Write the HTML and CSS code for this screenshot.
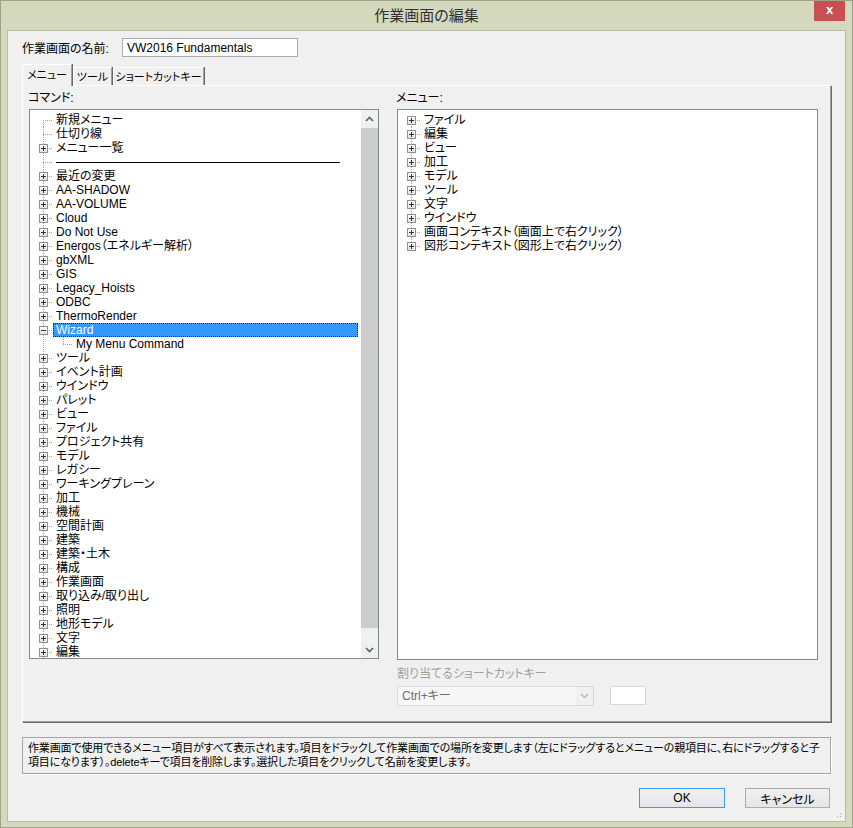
FILE: index.html
```html
<!DOCTYPE html>
<html>
<head>
  <meta charset="utf-8">
  <title>作業画面の編集</title>
  <link rel="stylesheet" href="styles.css">
</head>
<body>
  <div class="window">
    <div class="titlebar">
      <span></span>
      <span class="title">作業画面の編集</span>
      <span class="close">x</span>
    </div>

    <div class="client">
      <div class="name-row">
        <label for="wsName">作業画面の名前:</label>
        <input type="text" id="wsName" value="VW2016 Fundamentals">
      </div>

      <div class="tabs">
        <div class="tab active w-menu">メニュー</div>
        <div class="tab w-tool">ツール</div>
        <div class="tab w-key">ショートカットキー</div>
      </div>

      <div class="panel">
        <div class="col col-left">
          <div class="caption">コマンド:</div>
          <div class="treebox">
            <div class="tree">
              <div class="row first"><i class="nox"></i><span class="lbl">新規メニュー</span></div>
              <div class="row"><i class="nox"></i><span class="lbl">仕切り線</span></div>
              <div class="row"><i class="exp"></i><span class="lbl">メニュー一覧</span></div>
              <div class="row"><i class="nox"></i><span class="lbl"><span class="sep-line"></span></span></div>
              <div class="row"><i class="exp"></i><span class="lbl">最近の変更</span></div>
              <div class="row"><i class="exp"></i><span class="lbl">AA-SHADOW</span></div>
              <div class="row"><i class="exp"></i><span class="lbl">AA-VOLUME</span></div>
              <div class="row"><i class="exp"></i><span class="lbl">Cloud</span></div>
              <div class="row"><i class="exp"></i><span class="lbl">Do Not Use</span></div>
              <div class="row"><i class="exp"></i><span class="lbl">Energos（エネルギー解析）</span></div>
              <div class="row"><i class="exp"></i><span class="lbl">gbXML</span></div>
              <div class="row"><i class="exp"></i><span class="lbl">GIS</span></div>
              <div class="row"><i class="exp"></i><span class="lbl">Legacy_Hoists</span></div>
              <div class="row"><i class="exp"></i><span class="lbl">ODBC</span></div>
              <div class="row"><i class="exp"></i><span class="lbl">ThermoRender</span></div>
              <div class="row"><i class="exp open"></i><span class="lbl sel">Wizard</span></div>
              <div class="row child"><i class="nox"></i><span class="lbl">My Menu Command</span></div>
              <div class="row"><i class="exp"></i><span class="lbl">ツール</span></div>
              <div class="row"><i class="exp"></i><span class="lbl">イベント計画</span></div>
              <div class="row"><i class="exp"></i><span class="lbl">ウインドウ</span></div>
              <div class="row"><i class="exp"></i><span class="lbl">パレット</span></div>
              <div class="row"><i class="exp"></i><span class="lbl">ビュー</span></div>
              <div class="row"><i class="exp"></i><span class="lbl">ファイル</span></div>
              <div class="row"><i class="exp"></i><span class="lbl">プロジェクト共有</span></div>
              <div class="row"><i class="exp"></i><span class="lbl">モデル</span></div>
              <div class="row"><i class="exp"></i><span class="lbl">レガシー</span></div>
              <div class="row"><i class="exp"></i><span class="lbl">ワーキングプレーン</span></div>
              <div class="row"><i class="exp"></i><span class="lbl">加工</span></div>
              <div class="row"><i class="exp"></i><span class="lbl">機械</span></div>
              <div class="row"><i class="exp"></i><span class="lbl">空間計画</span></div>
              <div class="row"><i class="exp"></i><span class="lbl">建築</span></div>
              <div class="row"><i class="exp"></i><span class="lbl">建築・土木</span></div>
              <div class="row"><i class="exp"></i><span class="lbl">構成</span></div>
              <div class="row"><i class="exp"></i><span class="lbl">作業画面</span></div>
              <div class="row"><i class="exp"></i><span class="lbl">取り込み/取り出し</span></div>
              <div class="row"><i class="exp"></i><span class="lbl">照明</span></div>
              <div class="row"><i class="exp"></i><span class="lbl">地形モデル</span></div>
              <div class="row"><i class="exp"></i><span class="lbl">文字</span></div>
              <div class="row"><i class="exp"></i><span class="lbl">編集</span></div>
            </div>
            <div class="vscroll">
              <div class="sbtn">
                <svg width="9" height="6" viewBox="0 0 9 6"><path d="M1 5 L4.5 1.5 L8 5" fill="none" stroke="#606060" stroke-width="1.6"/></svg>
              </div>
              <div class="track"><div class="thumb"></div></div>
              <div class="sbtn">
                <svg width="9" height="6" viewBox="0 0 9 6"><path d="M1 1 L4.5 4.5 L8 1" fill="none" stroke="#606060" stroke-width="1.6"/></svg>
              </div>
            </div>
          </div>
        </div>

        <div class="col col-right">
          <div class="caption">メニュー:</div>
          <div class="treebox right">
            <div class="tree">
              <div class="row first"><i class="exp"></i><span class="lbl">ファイル</span></div>
              <div class="row"><i class="exp"></i><span class="lbl">編集</span></div>
              <div class="row"><i class="exp"></i><span class="lbl">ビュー</span></div>
              <div class="row"><i class="exp"></i><span class="lbl">加工</span></div>
              <div class="row"><i class="exp"></i><span class="lbl">モデル</span></div>
              <div class="row"><i class="exp"></i><span class="lbl">ツール</span></div>
              <div class="row"><i class="exp"></i><span class="lbl">文字</span></div>
              <div class="row"><i class="exp"></i><span class="lbl">ウインドウ</span></div>
              <div class="row"><i class="exp"></i><span class="lbl">画面コンテキスト（画面上で右クリック）</span></div>
              <div class="row last"><i class="exp"></i><span class="lbl">図形コンテキスト（図形上で右クリック）</span></div>
            </div>
          </div>

          <div class="shortcut-label">割り当てるショートカットキー</div>
          <div class="shortcut-row">
            <div class="combo">
              <span class="combo-text">Ctrl+キー</span>
              <span class="combo-arrow">
                <svg width="9" height="6" viewBox="0 0 9 6"><path d="M1 1 L4.5 4.5 L8 1" fill="none" stroke="#bcbcbc" stroke-width="1.5"/></svg>
              </span>
            </div>
            <div class="keybox"></div>
          </div>
        </div>
      </div>

      <div class="desc">
        作業画面で使用できるメニュー項目がすべて表示されます。項目をドラックして作業画面での場所を変更します（左にドラッグするとメニューの親項目に、右にドラッグすると子<br>
        項目になります）。deleteキーで項目を削除します。選択した項目をクリックして名前を変更します。
      </div>

      <div class="buttons">
        <button class="btn default">OK</button>
        <button class="btn">キャンセル</button>
      </div>

      <div class="grip"></div>
    </div>
  </div>
</body>
</html>
```

FILE: styles.css
```css
body {
  margin: 0;
  background: #d4d9be;
  font-family: "Liberation Sans", "Noto Sans CJK JP", sans-serif;
  font-size: 12px;
  font-feature-settings: "palt";
  color: #000;
}
.window {
  width: 853px;
  height: 828px;
  box-sizing: border-box;
  border: 1px solid #9ea389;
  background: #d4d9be;
}
.titlebar {
  height: 29px;
  display: grid;
  grid-template-columns: 1fr auto 1fr;
}
.title {
  font-size: 15px;
  line-height: 30px;
  color: #333;
}
.close {
  justify-self: end;
  align-self: start;
  width: 31px;
  height: 20px;
  margin-right: 7px;
  background: #c75050;
  color: #fff;
  font-size: 13px;
  font-weight: bold;
  line-height: 18px;
  text-align: center;
}
.client {
  position: relative;
  height: 790px;
  margin: 0 6px;
  border: 1px solid #b8bda2;
  background: #f0f0f0;
  padding: 0 14px;
}

/* name */
.name-row {
  display: flex;
  align-items: center;
  padding-top: 7px;
}
.name-row label {
  width: 100px;
}
.name-row input {
  width: 176px;
  height: 19px;
  box-sizing: border-box;
  border: 1px solid #abadb3;
  padding: 0 4px;
  font: inherit;
  font-size: 12px;
}

/* tabs */
.tabs {
  display: flex;
  align-items: flex-end;
  margin-top: 7px;
  height: 21px;
}
.tab {
  height: 18px;
  line-height: 18px;
  box-sizing: border-box;
  text-align: center;
  white-space: nowrap;
  font-size: 11px;
  border-top: 1px solid #fff;
  border-left: 1px solid #fff;
  border-right: 1px solid #a0a0a0;
  box-shadow: 1px 0 0 #696969;
  margin-right: 1px;
}
.tab.active {
  position: relative;
  z-index: 1;
  background: #f0f0f0;
  margin-bottom: -1px;
  height: 22px;
  line-height: 20px;
}
.w-menu { width: 50px; }
.w-tool { width: 39px; }
.w-key { width: 91px; }

/* panel */
.panel {
  display: flex;
  gap: 18px;
  height: 637px;
  box-sizing: border-box;
  border-top: 1px solid #fff;
  border-left: 1px solid #fff;
  border-right: 1px solid #a0a0a0;
  border-bottom: 1px solid #a0a0a0;
  box-shadow: 1px 1px 0 #696969;
  padding: 0 6px;
}
.caption {
  line-height: 14px;
  margin: 5px 0 4px -1px;
}
.col-left {
  width: 350px;
}
.col-right {
  width: 421px;
}
.treebox {
  display: flex;
  height: 550px;
  box-sizing: border-box;
  border: 1px solid #828790;
  background: #fff;
  overflow: hidden;
}
.treebox.right {
  height: 551px;
}
.tree {
  flex: 1;
  padding-top: 3px;
  overflow: hidden;
}
.row {
  display: flex;
  align-items: flex-start;
  height: 14px;
  padding-left: 9px;
  white-space: nowrap;
  background-image:
    repeating-linear-gradient(to bottom, #a0a0a0 0 1px, transparent 1px 2px),
    repeating-linear-gradient(to right, #a0a0a0 0 1px, transparent 1px 2px);
  background-repeat: no-repeat;
  background-position: 13px 0, 13px 7px;
  background-size: 1px 14px, 10px 1px;
}
.row.first {
  background-position: 13px 7px, 13px 7px;
  background-size: 1px 7px, 10px 1px;
}
.row.last {
  background-size: 1px 8px, 10px 1px;
}
.row.child {
  padding-left: 29px;
  background-image:
    repeating-linear-gradient(to bottom, #a0a0a0 0 1px, transparent 1px 2px),
    repeating-linear-gradient(to bottom, #a0a0a0 0 1px, transparent 1px 2px),
    repeating-linear-gradient(to right, #a0a0a0 0 1px, transparent 1px 2px);
  background-position: 13px 0, 33px 0, 33px 7px;
  background-size: 1px 14px, 1px 8px, 10px 1px;
}
.exp, .nox {
  flex: none;
  width: 9px;
  height: 9px;
  margin-top: 3px;
  box-sizing: border-box;
}
.exp {
  border: 1px solid #919191;
  background:
    linear-gradient(#23334f, #23334f) center / 5px 1px no-repeat,
    linear-gradient(#23334f, #23334f) center / 1px 5px no-repeat,
    linear-gradient(#fff, #e2e2e2);
}
.exp.open {
  background:
    linear-gradient(#23334f, #23334f) center / 5px 1px no-repeat,
    linear-gradient(#fff, #e2e2e2);
}
.lbl {
  margin-left: 5px;
  padding: 0 3px;
  height: 14px;
  line-height: 14px;
}
.lbl.sel {
  flex: 1;
  margin-right: 3px;
  background: #3399ff;
  color: #fff;
  outline: 1px dotted #222;
  outline-offset: -1px;
}
.sep-line {
  display: inline-block;
  width: 284px;
  height: 1px;
  background: #000;
  vertical-align: 3px;
}

/* scrollbar */
.vscroll {
  width: 17px;
  display: flex;
  flex-direction: column;
  background: #f0f0f0;
}
.sbtn {
  height: 17px;
  display: flex;
  align-items: center;
  justify-content: center;
}
.track {
  flex: 1;
  padding-top: 1px;
}
.thumb {
  height: 500px;
  background: #cdcdcd;
}

/* shortcut */
.shortcut-label {
  color: #a0a0a0;
  line-height: 14px;
  margin-top: 7px;
}
.shortcut-row {
  display: flex;
  align-items: flex-start;
  gap: 16px;
  margin-top: 5px;
}
.combo {
  display: flex;
  width: 197px;
  height: 20px;
  box-sizing: border-box;
  border: 1px solid #d9d9d9;
  background: #f0f0f0;
}
.combo-text {
  flex: 1;
  background: #f7f7f7;
  color: #6d6d6d;
  line-height: 18px;
  padding-left: 4px;
}
.combo-arrow {
  width: 17px;
  display: flex;
  align-items: center;
  justify-content: center;
}
.keybox {
  width: 36px;
  height: 19px;
  box-sizing: border-box;
  border: 1px solid #d9d9d9;
  background: #fff;
}

/* description */
.desc {
  margin-top: 15px;
  height: 37px;
  box-sizing: border-box;
  border: 1px solid #a5a5a5;
  box-shadow: 1px 1px 0 #fff;
  padding: 3px 5px 0;
  font-size: 11px;
  letter-spacing: -0.15px;
  line-height: 14px;
  white-space: nowrap;
  overflow: hidden;
}

/* buttons */
.buttons {
  display: flex;
  justify-content: flex-end;
  gap: 20px;
  margin-top: 14px;
  padding-right: 1px;
}
.btn {
  width: 85px;
  height: 20px;
  box-sizing: border-box;
  border: 1px solid #acacac;
  background: linear-gradient(#f0f0f0, #e5e5e5);
  font: inherit;
  font-size: 12px;
  padding: 0;
}
.btn.default {
  width: 86px;
  border-color: #3c9ae8;
}
.grip {
  position: absolute;
  right: 2px;
  bottom: 2px;
  width: 10px;
  height: 10px;
  background: radial-gradient(circle, #a8a8a8 0.8px, transparent 1px) 0 0 / 3px 3px;
  clip-path: polygon(100% 0, 100% 100%, 0 100%);
}
```
